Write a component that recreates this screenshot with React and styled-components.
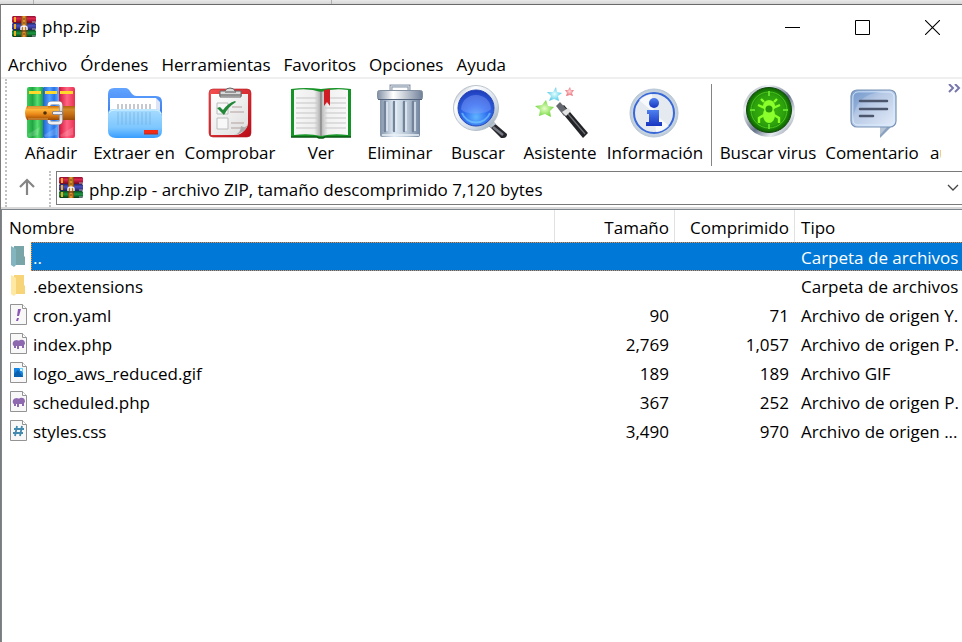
import React from "react";
import styled, { createGlobalStyle } from "styled-components";

const GlobalStyle = createGlobalStyle`
  *, *::before, *::after { box-sizing: border-box; }
  html, body { height: 100%; margin: 0; background: #fff; overflow: hidden; }
  #root { height: 100%; }
  body, button, input, select, table {
    font-family: "Open Sans", "Noto Sans", sans-serif;
    font-size: 17px;
    line-height: 24px;
    color: #000;
  }
  button { border: 0; padding: 0; margin: 0; background: none; }
`;

const Page = styled.div`
  display: flex;
  flex-direction: column;
  min-height: 100vh;
`;

const Backdrop = styled.div`
  display: grid;
  grid-template-columns: 33px 298px 1fr;
  height: 4px;
  background: linear-gradient(#e9e9e9, #d6d6d6);
`;

const BackdropCell = styled.div`
  border-left: ${(p) => (p.$line ? "1px solid #b0b0b0" : "0")};
`;

const Window = styled.main`
  flex: 1;
  display: flex;
  flex-direction: column;
  border-top: 1px solid #6a6a6a;
  border-left: 1px solid #7c7c7c;
  background: #fff;
`;

const TitleBar = styled.header`
  display: flex;
  align-items: center;
  height: 44px;
  padding-left: 11px;
`;

const Title = styled.h1`
  flex: 1;
  margin: 0 0 0 6px;
  font-size: 17px;
  line-height: 24px;
  font-weight: 400;
`;

const CaptionButtons = styled.div`
  display: flex;
  gap: 10px;
`;

const CaptionButton = styled.button`
  display: grid;
  place-items: center;
  width: 60px;
  height: 42px;
`;

const MenuBar = styled.nav`
  display: flex;
  gap: 13px;
  height: 28px;
  padding-left: 7px;
`;

const MenuButton = styled.button`
  line-height: 32px;
`;

const Bands = styled.div`
  display: flex;
  flex-direction: column;
  border-top: 2px solid #efefef;
  border-bottom: 2px solid #d9d9d9;
  padding-left: 4px;
`;

const GripFrame = styled.div`
  display: flex;
  flex-direction: column;
  border-left: 2px dotted #c2c2c2;
`;

const ToolBar = styled.div`
  display: flex;
  height: 92px;
  padding: 5px 0 0 5px;
`;

const Tools = styled.div`
  flex: 1;
  display: flex;
  overflow: hidden;
`;

const ToolButton = styled.button`
  flex: none;
  display: flex;
  flex-direction: column;
  align-items: center;
  width: ${(p) => p.$width}px;
  white-space: nowrap;
  svg { display: block; margin-bottom: 1px; }
`;

const Divider = styled.span`
  flex: none;
  width: 1px;
  height: 82px;
  margin: 0 6px 0 5px;
  background: #858585;
`;

const ClippedLabel = styled.span`
  width: 12px;
  margin: 57px 0 0 4px;
  overflow: hidden;
`;

const Chevron = styled.button`
  align-self: flex-start;
  width: 21px;
  height: 10px;
  line-height: 0;
  padding-left: 6px;
`;

const AddressBand = styled.div`
  display: flex;
  height: 36px;
`;

const UpButton = styled.button`
  display: grid;
  place-items: center;
  width: 42px;
  height: 32px;
  padding-right: 2px;
`;

const AddressGrip = styled.div`
  flex: 1;
  border-left: 2px dotted #c2c2c2;
  padding-left: 5px;
`;

const AddressBox = styled.div`
  display: flex;
  align-items: center;
  height: 34px;
  padding: 0 2px;
  border: 1px solid #7a7a7a;
  border-right: 0;
`;

const AddressInput = styled.input`
  flex: 1;
  min-width: 0;
  border: 0;
  padding: 4px 0 0;
  margin-left: 6px;
  background: none;
  outline: none;
`;

const DropButton = styled.button`
  width: 14px;
  line-height: 0;
`;

const ListPane = styled.section`
  flex: 1;
  border-top: 1px solid #7f858c;
  border-left: 1px solid #7f858c;
  overflow: hidden;
`;

const FileTable = styled.table`
  width: 100%;
  table-layout: fixed;
  border-collapse: separate;
  border-spacing: 0;
`;

const HeadCell = styled.th`
  height: 32px;
  padding: 3px 5px 0 7px;
  font-weight: 400;
  text-align: ${(p) => (p.$right ? "right" : "left")};
  border-left: ${(p) => (p.$line ? "1px solid #e2e2e2" : "0")};
  ${(p) => p.$line && !p.$right && "padding-left: 6px;"}
`;

const FileRow = styled.tr`
  height: 29px;
`;

const IconCell = styled.td`
  height: 29px;
  padding: 0 0 0 8px;
  line-height: 0;
`;

const Cell = styled.td`
  height: 29px;
  padding: 3px 5px 0 0;
  ${(p) => p.$name && "padding-left: 2px;"}
  ${(p) => p.$type && "padding: 3px 0 0 7px;"}
  line-height: 24px;
  white-space: nowrap;
  overflow: hidden;
  text-align: ${(p) => (p.$right ? "right" : "left")};
  ${(p) =>
    p.$selected &&
    `
    color: #fff;
    background-color: #0078d7;
    background-image:
      linear-gradient(90deg, #ff8728 50%, #0078d7 50%),
      linear-gradient(90deg, #ff8728 50%, #0078d7 50%),
      linear-gradient(#ff8728 50%, #0078d7 50%);
    background-position: left top, left bottom, left top;
    background-size: 2px 1px, 2px 1px, ${p.$name ? "1px" : "0"} 2px;
    background-repeat: repeat-x, repeat-x, repeat-y;
  `}
`;

const ArchiveIcon = () => (
  <svg width="24" height="22" viewBox="0 0 24 22" aria-hidden="true">
    <defs>
      <linearGradient id="aR" x1="0" y1="0" x2="0" y2="1"><stop offset="0" stopColor="#8c1030" /><stop offset=".35" stopColor="#e02850" /><stop offset="1" stopColor="#6e0824" /></linearGradient>
      <linearGradient id="aB" x1="0" y1="0" x2="0" y2="1"><stop offset="0" stopColor="#282860" /><stop offset=".4" stopColor="#4a50c4" /><stop offset="1" stopColor="#202050" /></linearGradient>
      <linearGradient id="aG" x1="0" y1="0" x2="0" y2="1"><stop offset="0" stopColor="#0b4a20" /><stop offset=".45" stopColor="#1c9a40" /><stop offset="1" stopColor="#083818" /></linearGradient>
      <linearGradient id="aS" x1="0" y1="0" x2="1" y2="0"><stop offset="0" stopColor="#7a4410" /><stop offset=".5" stopColor="#f0a030" /><stop offset="1" stopColor="#7a4410" /></linearGradient>
    </defs>
    <path d="M1 0H23L24 1V6L23 7H1L0 6V1Z" fill="url(#aR)" />
    <path d="M1 7H23L24 8V13L23 14H1L0 13V8Z" fill="url(#aB)" />
    <path d="M1 14H23L24 15V20L23 21H1L0 20V15Z" fill="url(#aG)" />
    <path d="M20 6h4M20 13h4M20 20h4" stroke="#a9a4b4" strokeWidth="1" />
    <path d="M2 1h2v5H2zM2 8h2v5H2zM2 15h2v5H2z" fill="#f0ac20" />
    <rect x="9" y="0" width="6" height="21" rx="1" fill="url(#aS)" />
    <path d="M12 2v2M12 6v2M12 17v2" stroke="#754010" strokeWidth="1" />
    <path d="M9 14v-2q0-2 3-2t3 2v2" fill="none" stroke="#e6e6ef" strokeWidth="1.6" />
    <path d="M12 10v4" stroke="#fff" strokeWidth="1.4" /><path d="M9 15h6" stroke="#503018" />
  </svg>
);

const BeltBooks = () => (
  <>
    <defs>
      <linearGradient id="bg" x1="0" x2="1"><stop offset="0" stopColor="#3ccf58" /><stop offset=".35" stopColor="#22a546" /><stop offset=".65" stopColor="#58df70" /><stop offset="1" stopColor="#1f9f42" /></linearGradient>
      <linearGradient id="bb" x1="0" x2="1"><stop offset="0" stopColor="#2060d0" /><stop offset=".4" stopColor="#52a0ff" /><stop offset=".7" stopColor="#2c72e4" /><stop offset="1" stopColor="#60b4ff" /></linearGradient>
      <linearGradient id="br" x1="0" x2="1"><stop offset="0" stopColor="#d41438" /><stop offset=".5" stopColor="#ff6484" /><stop offset="1" stopColor="#e83050" /></linearGradient>
      <linearGradient id="bs" x1="0" y1="0" x2="0" y2="1"><stop offset="0" stopColor="#c66a0c" /><stop offset=".25" stopColor="#ffb83c" /><stop offset=".6" stopColor="#e88718" /><stop offset="1" stopColor="#9a4600" /></linearGradient>
      <linearGradient id="bk" x1="0" y1="0" x2="0" y2="1"><stop offset="0" stopColor="#fff" /><stop offset=".5" stopColor="#c9ccd6" /><stop offset="1" stopColor="#eef0f4" /></linearGradient>
    </defs>
    <path d="M6 5q0-2 2-2h14v51H8q-2 0-2-2z" fill="url(#bg)" />
    <rect x="22" y="3" width="16" height="51" rx="1" fill="url(#bb)" />
    <path d="M38 3h14q2 0 2 2v47q0 2-2 2H38z" fill="url(#br)" />
    <path d="M8 7h12v3H8zM24 7h12v3H24zM39 7h13v3H39z" fill="#ffd82c" />
    <path d="M7 50l12-7-2 8-9 2zM23 51l13-8v8l-12 2zM39 51l13-8v8l-12 2z" fill="#fff" opacity=".16" />
    <path d="M6 22H54V36H6q-4-7 0-14z" fill="url(#bs)" />
    <path d="M41 22h13v14H41z" fill="#9d5010" opacity=".45" />
    <path d="M7 23h20M7 35h20" stroke="#fff0a0" strokeWidth=".7" opacity=".7" />
    <circle cx="24" cy="29" r="1.8" fill="#50300a" />
    <path d="M28 22v-1q0-2 3-2h7q2 0 2 3v14q0 3-2 3h-7q-3 0-3-2v-1" fill="none" stroke="#70707c" strokeWidth="3.6" />
    <path d="M28 22v-1q0-2 3-2h7q2 0 2 3v14q0 3-2 3h-7q-3 0-3-2v-1" fill="none" stroke="url(#bk)" strokeWidth="2.8" />
    <path d="M33 29h7" stroke="#70707c" strokeWidth="4" strokeLinecap="round" /><path d="M33 29h7" stroke="#eeeef4" strokeWidth="2.4" strokeLinecap="round" />
  </>
);

const Folder = () => (
  <>
    <defs>
      <linearGradient id="fb" x1="0" y1="0" x2="0" y2="1"><stop offset="0" stopColor="#62a4ff" /><stop offset="1" stopColor="#2266e4" /></linearGradient>
      <linearGradient id="ff" x1="0" y1="0" x2="0" y2="1"><stop offset="0" stopColor="#a8dcff" /><stop offset=".65" stopColor="#7cc6ff" /><stop offset="1" stopColor="#389dff" /></linearGradient>
    </defs>
    <path d="M4 10q0-6 6-6h11c6 0 5 8 12 8h19q6 0 6 6v27H4z" fill="url(#fb)" />
    <path d="M6 14h46l4 4v26H6z" fill="#dce4f5" /><path d="M6 14h46v28H6z" fill="#fff" />
    <path d="M14 20v5M18 20v5M22 20v5M26 20v5M30 20v5M34 20v5M38 20v5M42 20v5M46 20v5" stroke="#8b929e" strokeWidth="1" />
    <path d="M4 30q0-5 6-5h40q8 0 8 7v15q0 7-8 7H12q-8 0-8-7z" fill="url(#ff)" />
    <path d="M5 29q1-3 6-3h39q6 0 7 4" fill="none" stroke="#d7f4ff" />
    <path d="M14 28v13M18 28v13M22 28v13M26 28v13M30 28v13M34 28v13M38 28v13M42 28v13M46 28v13" stroke="#6da6d4" strokeWidth="1" opacity=".55" />
    <rect x="40" y="46" width="14" height="4" fill="#f52b16" /><path d="M40 50h14" stroke="#9a3030" />
  </>
);

const Clipboard = () => (
  <>
    <defs>
      <linearGradient id="cr" x1="0" y1="0" x2="1" y2="1"><stop offset="0" stopColor="#f65050" /><stop offset="1" stopColor="#b90c18" /></linearGradient>
      <linearGradient id="cp" x1="0" y1="0" x2="1" y2="1"><stop offset="0" stopColor="#fff" /><stop offset="1" stopColor="#ddd" /></linearGradient>
    </defs>
    <rect x="9" y="5" width="42" height="48" rx="4" fill="url(#cr)" stroke="#ae1d24" strokeWidth=".6" />
    <path d="M11 10h37v29q0 4-4 8t-8 4H11z" fill="url(#cp)" />
    <path d="M34 51q7-2 7-9 5 3 7-2-2 9-14 11z" fill="#aaa" />
    <path d="M20 13V7h5q1-3 5-3t5 3h6v6z" fill="#d9d9d9" stroke="#626262" /><path d="M19 11h23" stroke="#777" strokeWidth="1.5" /><path d="M25 8h11" stroke="#555" />
    <path d="M17 19h11v11H17zM17 34h11v11H17z" fill="#f8f8f8" stroke="#bcbcbc" />
    <path d="M17 24l3-1 3 3q5-7 12-9l1 1q-8 5-12 13z" fill="#23883a" />
    <path d="M32 23h10M30 28h14M31 39h13M31 44h10" stroke="#b49f9f" strokeWidth="1" />
  </>
);

const Book = () => (
  <>
    <defs>
      <linearGradient id="vl" x1="0" x2="1"><stop offset="0" stopColor="#f7f7f7" /><stop offset=".75" stopColor="#eee" /><stop offset="1" stopColor="#aaa" /></linearGradient>
      <linearGradient id="vr" x1="0" x2="1"><stop offset="0" stopColor="#b3b3b3" /><stop offset=".25" stopColor="#f1f1f1" /><stop offset="1" stopColor="#f9f9f9" /></linearGradient>
    </defs>
    <path d="M0 5q15-2 30 0 15-2 30 0v48H34l-2 1h-4l-2-1H0z" fill="#169326" />
    <path d="M0 53h26l2 1h4l2-1h26" stroke="#0a5a16" fill="none" strokeWidth="1.5" />
    <path d="M3 6q15-2 27 2v44q-12-3-27-1z" fill="url(#vl)" /><path d="M57 6Q42 4 30 8v44q12-3 27-1z" fill="url(#vr)" />
    <path d="M5 14h21M5 19h21M5 24h21M5 29h21M5 34h21M5 39h21M5 44h21M34 14h21M34 19h21M34 24h21M34 29h21M34 34h21M34 39h21M34 44h21" stroke="#c5c5c5" />
    <path d="M30 7v45" stroke="#777" /><path d="M33 6l6-1v17l-3-4-3 4z" fill="#cf1d24" />
  </>
);

const Trash = () => (
  <>
    <defs>
      <linearGradient id="tb" x1="0" x2="1"><stop offset="0" stopColor="#8292a8" /><stop offset=".35" stopColor="#e0ebf5" /><stop offset=".7" stopColor="#b5c3d3" /><stop offset="1" stopColor="#7284a0" /></linearGradient>
      <linearGradient id="tl" x1="0" x2="1"><stop offset="0" stopColor="#8290a5" /><stop offset=".35" stopColor="#fff" /><stop offset="1" stopColor="#71819a" /></linearGradient>
    </defs>
    <path d="M21 8V2h18v6" fill="none" stroke="#8795a7" strokeWidth="3" /><path d="M21 7V2h18v5" fill="none" stroke="#dbe2ea" />
    <path d="M10 14h40v37q0 2-2 2H12q-2 0-2-2z" fill="url(#tb)" />
    {[15, 24, 34, 43].map((x) => <React.Fragment key={x}><path d={`M${x} 18v29`} stroke="#72839a" strokeWidth="2.4" strokeLinecap="round" /><path d={`M${x + 2} 18v29`} stroke="#e8f0f8" strokeWidth="1.4" /></React.Fragment>)}
    <path d="M12 51h37" stroke="#edf2f7" strokeWidth="1.5" />
    <rect x="7.5" y="6.5" width="45" height="9" rx="2" fill="url(#tl)" stroke="#8290a2" /><path d="M8 15.5h44" stroke="#53647c" />
  </>
);

const Magnifier = () => (
  <>
    <defs>
      <radialGradient id="mg" cx=".5" cy=".75" r=".8"><stop offset="0" stopColor="#60b6ff" /><stop offset=".4" stopColor="#3070f0" /><stop offset="1" stopColor="#1d35b4" /></radialGradient>
      <linearGradient id="mr" x1="0" y1="0" x2="1" y2="1"><stop offset="0" stopColor="#8f9cac" /><stop offset=".25" stopColor="#fff" /><stop offset=".7" stopColor="#cdd9e5" /><stop offset="1" stopColor="#8798aa" /></linearGradient>
    </defs>
    <path d="M41 42l4-4 14 12q0 4-4 4h-2z" fill="#26272d" /><path d="M45 43l10 8" stroke="#777a82" strokeWidth="2.5" />
    <path d="M39 39l5-4 4 5-5 4z" fill="#b8c2cc" />
    <circle cx="28" cy="24" r="22.5" fill="url(#mr)" stroke="#a9b5c2" strokeWidth=".8" />
    <circle cx="28" cy="24" r="18" fill="url(#mg)" stroke="#2848b2" />
    <path d="M13 25c3 6 26 6 30 0-1-18-28-19-30 0z" fill="#93a8ff" opacity=".38" />
    <path d="M14 29a15 15 0 0 0 28 0" fill="none" stroke="#78cdff" strokeWidth="2" opacity=".65" />
  </>
);

const Wand = () => (
  <>
    <defs>
      <radialGradient id="wg"><stop offset="0" stopColor="#e8ffc8" /><stop offset="1" stopColor="#72d840" /></radialGradient>
      <radialGradient id="wb"><stop offset="0" stopColor="#e5ffff" /><stop offset="1" stopColor="#58cce8" /></radialGradient>
      <radialGradient id="wr"><stop offset="0" stopColor="#ffd8d8" /><stop offset="1" stopColor="#ea6e78" /></radialGradient>
    </defs>
    <path d="M16 16l2 6 6 1-4 4 1 6-6-3-6 2 1-6-5-4 7-1z" fill="url(#wg)" />
    <path d="M26 3l1 5 5 1-4 3 1 5-5-2-5 2 2-5-4-4h6z" fill="url(#wb)" />
    <path d="M40 3l1 3h3l-2 3 1 3-3-1-4 1 1-3-2-3h3z" fill="url(#wr)" />
    <path d="M29 25l5-4 24 28-5 5z" fill="#222326" /><path d="M33 24l22 26" stroke="#707277" strokeWidth="1.2" />
    <path d="M26 22l4-4 8 9-4 5z" fill="#65696f" /><path d="M32 28l6-4 3 3-5 5z" fill="#e3e3e3" />
  </>
);

const Info = () => (
  <>
    <defs>
      <radialGradient id="ir"><stop offset=".1" stopColor="#fff" /><stop offset=".7" stopColor="#dce4ec" /><stop offset="1" stopColor="#bccbd9" /></radialGradient>
      <linearGradient id="ii" x1="0" y1="0" x2="0" y2="1"><stop offset="0" stopColor="#4f80ef" /><stop offset="1" stopColor="#1734c0" /></linearGradient>
    </defs>
    <circle cx="29" cy="29" r="24" fill="url(#ir)" stroke="#b8c7d7" />
    <circle cx="29" cy="29" r="20" fill="#e4eaf0" stroke="#3868d8" strokeWidth="2" />
    <path d="M29 29l-15-13A20 20 0 0 1 27 10zM29 29l15 13A20 20 0 0 1 31 48z" fill="#fff" opacity=".7" />
    <circle cx="29" cy="19" r="5" fill="url(#ii)" /><path d="M22 26h12v12h3v4H21v-4h3v-8h-2z" fill="url(#ii)" />
  </>
);

const Virus = () => (
  <>
    <defs>
      <linearGradient id="xr" x1="0" y1="0" x2="1" y2="1"><stop offset="0" stopColor="#777f91" /><stop offset=".25" stopColor="#f0f3f6" /><stop offset=".55" stopColor="#68758b" /><stop offset=".75" stopColor="#e6ebf0" /><stop offset="1" stopColor="#6f7a8f" /></linearGradient>
      <radialGradient id="xg"><stop offset="0" stopColor="#3fb711" /><stop offset=".7" stopColor="#2ba00c" /><stop offset="1" stopColor="#0b6000" /></radialGradient>
    </defs>
    <circle cx="31" cy="27" r="26" fill="url(#xr)" /><circle cx="31" cy="26" r="22.5" fill="url(#xg)" stroke="#174813" />
    <circle cx="31" cy="26" r="18" fill="none" stroke="#4cc420" /><path d="M31 7v5M31 40v5M12 26h5M45 26h5" stroke="#60dc2a" strokeWidth="2" />
    <path d="M26 18l-3-3M36 18l3-3M27 24l-7-3M35 24l7-3M26 31l-5 3v5M36 31l5 3v5" stroke="#88ff28" strokeWidth="2.4" fill="none" />
    <ellipse cx="31" cy="31" rx="6" ry="8" fill="#8aff2c" /><circle cx="31" cy="22" r="6" fill="#8aff2c" /><circle cx="31" cy="25" r="3.5" fill="#279609" />
  </>
);

const Comment = () => (
  <>
    <defs>
      <linearGradient id="cc" x1="0" y1="0" x2="1" y2="1"><stop offset="0" stopColor="#7c9fd0" /><stop offset=".4" stopColor="#b7c9e5" /><stop offset="1" stopColor="#e5edfa" /></linearGradient>
    </defs>
    <path d="M38 41v13l14-14z" fill="#8ba2bf" /><path d="M38 41v10l9-10z" fill="#b7c5d7" />
    <rect x="9" y="6" width="45" height="37" rx="6" fill="url(#cc)" stroke="#7894b8" strokeWidth="1.2" />
    <rect x="11" y="8" width="41" height="33" rx="5" fill="none" stroke="#d9ecff" />
    <path d="M11 37C12 20 21 9 41 8H17q-6 0-6 6z" fill="#5d89c5" opacity=".3" />
    <path d="M18 17h27M18 25h27M18 32h13" stroke="#4b566c" strokeWidth="2.5" strokeLinecap="round" />
  </>
);

const ToolIcon = ({ art: Art }) => (
  <svg width="60" height="56" viewBox="0 0 60 56" aria-hidden="true"><Art /></svg>
);

const FolderIcon = ({ parent }) => (
  <svg width="18" height="24" viewBox="0 0 18 24" aria-hidden="true">
    <path d="M4 1h10v10l1 1v8H4z" fill={parent ? "#78a5a7" : "#f8d478"} />
    <path d="M1 1l5 3v16l-2 2-3-2z" fill={parent ? "#82b5bf" : "#ffe8a2"} />
  </svg>
);

const Elephant = () => (
  <path d="M3 10q1-2 4-2 2 1 3 0 5-1 5 4l-1 1v3h-2v-2H9v3H7v-3H6v2H4v-2q-2-1-1-4z" fill="#8f69b0" />
);

const fileMarks = {
  yaml: <path d="M8 6h3l-2 7H7zM7 15h2l-1 3H6z" fill="#8b58b4" />,
  php: <Elephant />,
  gif: <><rect x="4" y="7" width="9" height="9" fill="#1583df" /><path d="M4 16v-3l4-4 5 7z" fill="#0860ae" /><path d="M9 7h4v5z" fill="#66d1ff" /><circle cx="11" cy="9" r="1" fill="#fff" /></>,
  css: <path d="M7 7L5 17M12 7l-2 10M4 10h10M3 14h10" stroke="#438aae" strokeWidth="1.8" fill="none" />,
};

const FileIcon = ({ kind }) => (
  <svg width="18" height="24" viewBox="0 0 18 24" aria-hidden="true">
    <path d="M.5 1.5h12l4 4v16H.5z" fill="#f8f8f8" stroke="#939393" /><path d="M12.5 1.5v4h4" fill="#fff" stroke="#939393" />
    {fileMarks[kind]}
  </svg>
);

const menus = ["Archivo", "Órdenes", "Herramientas", "Favoritos", "Opciones", "Ayuda"];

const tools = [
  { label: "Añadir", width: 78, art: BeltBooks },
  { label: "Extraer en", width: 88, art: Folder },
  { label: "Comprobar", width: 104, art: Clipboard },
  { label: "Ver", width: 78, art: Book },
  { label: "Eliminar", width: 80, art: Trash },
  { label: "Buscar", width: 76, art: Magnifier },
  { label: "Asistente", width: 88, art: Wand },
  { label: "Información", width: 102, art: Info },
];

const scanTools = [
  { label: "Buscar virus", width: 100, art: Virus },
  { label: "Comentario", width: 108, art: Comment },
];

const files = [
  { name: "..", icon: <FolderIcon parent />, type: "Carpeta de archivos", selected: true },
  { name: ".ebextensions", icon: <FolderIcon />, type: "Carpeta de archivos" },
  { name: "cron.yaml", icon: <FileIcon kind="yaml" />, size: "90", packed: "71", type: "Archivo de origen Y." },
  { name: "index.php", icon: <FileIcon kind="php" />, size: "2,769", packed: "1,057", type: "Archivo de origen P." },
  { name: "logo_aws_reduced.gif", icon: <FileIcon kind="gif" />, size: "189", packed: "189", type: "Archivo GIF" },
  { name: "scheduled.php", icon: <FileIcon kind="php" />, size: "367", packed: "252", type: "Archivo de origen P." },
  { name: "styles.css", icon: <FileIcon kind="css" />, size: "3,490", packed: "970", type: "Archivo de origen ..." },
];

const renderTool = (t) => (
  <ToolButton key={t.label} type="button" $width={t.width}>
    <ToolIcon art={t.art} />
    {t.label}
  </ToolButton>
);

export default function App() {
  return (
    <Page>
      <GlobalStyle />
      <Backdrop><BackdropCell /><BackdropCell $line /><BackdropCell $line /></Backdrop>
      <Window>
        <TitleBar>
          <ArchiveIcon />
          <Title>php.zip</Title>
          <CaptionButtons>
            <CaptionButton type="button" aria-label="Minimizar"><svg width="15" height="15"><path d="M0 7.5h15" stroke="#000" /></svg></CaptionButton>
            <CaptionButton type="button" aria-label="Maximizar"><svg width="15" height="15"><path d="M.5.5h14v14H.5z" fill="none" stroke="#000" /></svg></CaptionButton>
            <CaptionButton type="button" aria-label="Cerrar"><svg width="15" height="15"><path d="M0 0l15 15M15 0L0 15" stroke="#000" strokeWidth="1.1" /></svg></CaptionButton>
          </CaptionButtons>
        </TitleBar>
        <MenuBar>{menus.map((m) => <MenuButton key={m} type="button">{m}</MenuButton>)}</MenuBar>
        <Bands>
          <GripFrame>
            <ToolBar>
              <Tools>
                {tools.map(renderTool)}
                <Divider />
                {scanTools.map(renderTool)}
                <ClippedLabel>au</ClippedLabel>
              </Tools>
              <Chevron type="button" aria-label="Más herramientas"><svg width="14" height="10"><path d="M1 0l4 4-4 4M7 0l4 4-4 4" fill="none" stroke="#7777ad" strokeWidth="2" /></svg></Chevron>
            </ToolBar>
            <AddressBand>
              <UpButton type="button" aria-label="Subir"><svg width="18" height="18"><path d="M9 17V2M2 9l7-7 7 7" fill="none" stroke="#858585" strokeWidth="2.2" /></svg></UpButton>
              <AddressGrip>
                <AddressBox>
                  <ArchiveIcon />
                  <AddressInput aria-label="Ruta" defaultValue="php.zip - archivo ZIP, tamaño descomprimido 7,120 bytes" />
                  <DropButton type="button" aria-label="Desplegar"><svg width="12" height="8"><path d="M1 1l5 5 5-5" fill="none" stroke="#444" strokeWidth="1.3" /></svg></DropButton>
                </AddressBox>
              </AddressGrip>
            </AddressBand>
          </GripFrame>
        </Bands>
        <ListPane>
          <FileTable>
            <colgroup><col width="29" /><col width="523" /><col width="120" /><col width="120" /><col /></colgroup>
            <thead>
              <tr>
                <HeadCell colSpan={2} scope="col">Nombre</HeadCell>
                <HeadCell $line $right scope="col">Tamaño</HeadCell>
                <HeadCell $line $right scope="col">Comprimido</HeadCell>
                <HeadCell $line scope="col">Tipo</HeadCell>
              </tr>
            </thead>
            <tbody>
              {files.map((f) => (
                <FileRow key={f.name}>
                  <IconCell>{f.icon}</IconCell>
                  <Cell $name $selected={f.selected}>{f.name}</Cell>
                  <Cell $right $selected={f.selected}>{f.size}</Cell>
                  <Cell $right $selected={f.selected}>{f.packed}</Cell>
                  <Cell $type $selected={f.selected}>{f.type}</Cell>
                </FileRow>
              ))}
            </tbody>
          </FileTable>
        </ListPane>
      </Window>
    </Page>
  );
}
